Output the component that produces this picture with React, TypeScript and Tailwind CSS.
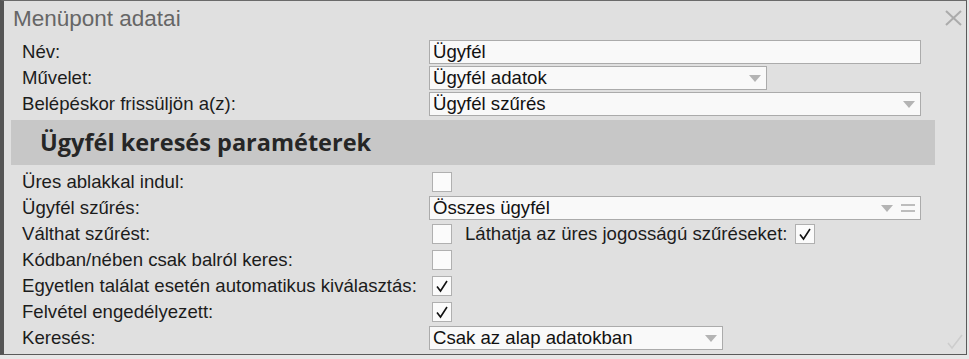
import React from "react";

const Arrow = () => (
  <svg width="12" height="7" viewBox="0 0 12 7" className="shrink-0">
    <polygon points="0,0 12,0 6,7" fill="#b4b4b4" />
  </svg>
);

const Check = () => (
  <svg width="18" height="18" viewBox="0 0 18 18">
    <polyline points="4,9.5 7.5,14 14,4" fill="none" stroke="#111" strokeWidth="1.6" />
  </svg>
);

const Box = ({ checked }: { checked?: boolean }) => (
  <div className="w-[20px] h-[20px] border border-[#b0b0b0] bg-[#fbfbfb] flex items-center justify-center">
    {checked ? <Check /> : null}
  </div>
);

const Input = ({ value, width }: { value: string; width: string }) => (
  <div className={`${width} h-[24px] border border-[#ababab] bg-[#f9f9f9] flex items-center pl-[3px] text-[18.6px] leading-none text-[#111]`}>
    {value}
  </div>
);

const Select = ({ value, width, eq }: { value: string; width: string; eq?: boolean }) => (
  <div className={`${width} h-[24px] border border-[#ababab] bg-[#f9f9f9] flex items-center pl-[3px] pr-[5px] text-[18.6px] leading-none text-[#111]`}>
    <span className="flex-1">{value}</span>
    <Arrow />
    {eq ? (
      <div className="ml-[8px] w-[14px] flex flex-col gap-[4px]">
        <div className="h-[2px] bg-[#bdbdbd]" />
        <div className="h-[2px] bg-[#bdbdbd]" />
      </div>
    ) : null}
  </div>
);

const Row = ({ label, children }: { label: string; children?: React.ReactNode }) => (
  <div className="flex h-[26px] items-center">
    <div className="w-[407px] shrink-0 text-[18.6px] leading-[26px] text-[#1c1c1c] whitespace-nowrap">{label}</div>
    <div className="flex items-center">{children}</div>
  </div>
);

export default function App() {
  return (
    <div className="w-[969px] h-[359px] bg-[#e7e7e7]" style={{ fontFamily: '"Liberation Sans", Arial, sans-serif' }}>
      <div className="relative w-[967px] h-[355px] bg-[#e0e0e0] border-t border-t-[#6a6a6a] border-r border-r-[#5a5a5a] border-b border-b-[#5a5a5a] border-l-[4px] border-l-[#555555]">
        <div className="h-[38px] pl-[9px] text-[22.5px] leading-[36px] text-[#666666]">Menüpont adatai</div>
        <svg className="absolute left-[941px] top-[9px]" width="17" height="16" viewBox="0 0 17 16">
          <line x1="1" y1="1" x2="16" y2="15" stroke="#ababab" strokeWidth="2" />
          <line x1="16" y1="1" x2="1" y2="15" stroke="#ababab" strokeWidth="2" />
        </svg>
        <div className="pl-[18px]">
          <Row label="Név:">
            <Input value="Ügyfél" width="w-[492px]" />
          </Row>
          <Row label="Művelet:">
            <Select value="Ügyfél adatok" width="w-[338px]" />
          </Row>
          <Row label="Belépéskor frissüljön a(z):">
            <Select value="Ügyfél szűrés" width="w-[492px]" />
          </Row>
        </div>
        <div className="mt-[3px] ml-[7px] w-[924px] h-[45px] bg-[#c7c7c7] pl-[29px] pt-[1px] flex items-center text-[23.5px] font-bold text-[#262626]" style={{ fontFamily: '"Open Sans", "Noto Sans", sans-serif' }}>
          Ügyfél keresés paraméterek
        </div>
        <div className="pl-[18px] mt-[4px]">
          <Row label="Üres ablakkal indul:">
            <div className="ml-[3px]"><Box /></div>
          </Row>
          <Row label="Ügyfél szűrés:">
            <Select value="Összes ügyfél" width="w-[492px]" eq />
          </Row>
          <Row label="Válthat szűrést:">
            <div className="ml-[3px]"><Box /></div>
            <span className="ml-[13px] text-[18.6px] leading-[26px] text-[#1c1c1c] whitespace-nowrap">Láthatja az üres jogosságú szűréseket:</span>
            <div className="ml-[7px]"><Box checked /></div>
          </Row>
          <Row label="Kódban/nében csak balról keres:">
            <div className="ml-[3px]"><Box /></div>
          </Row>
          <Row label="Egyetlen találat esetén automatikus kiválasztás:">
            <div className="ml-[3px]"><Box checked /></div>
          </Row>
          <Row label="Felvétel engedélyezett:">
            <div className="ml-[3px]"><Box checked /></div>
          </Row>
          <Row label="Keresés:">
            <Select value="Csak az alap adatokban" width="w-[294px]" />
          </Row>
        </div>
        <svg className="absolute left-[942px] top-[333px]" width="18" height="16" viewBox="0 0 18 16">
          <polyline points="2,9 6,14 16,1" fill="none" stroke="#cdcdcd" strokeWidth="1.6" />
        </svg>
      </div>
    </div>
  );
}
